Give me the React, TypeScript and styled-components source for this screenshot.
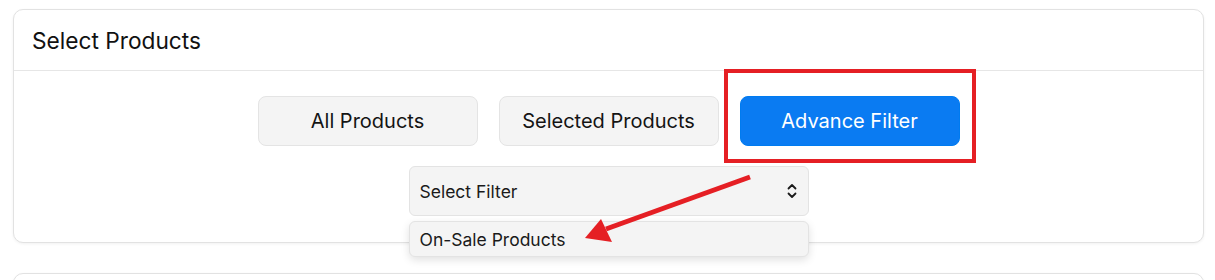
import React from 'react';
import styled, { createGlobalStyle } from 'styled-components';

const GlobalStyle = createGlobalStyle`
  body {
    margin: 0;
    background: #ffffff;
    font-family: Inter, "Noto Sans", sans-serif;
    color: #111111;
  }
`

const Page = styled.div`
  padding: 9px 11px 0 13px;
  display: flex;
  flex-direction: column;
  gap: 30px;
`

const Card = styled.div`
  position: relative;
  background: #ffffff;
  border: 1px solid #e2e2e2;
  border-radius: 10px;
  box-shadow: 0 1px 3px rgba(0, 0, 0, 0.06);
`

const CardHeader = styled.div`
  height: 60px;
  padding: 0 18px;
  display: flex;
  align-items: center;
  border-bottom: 1px solid #e6e6e6;
`

const Title = styled.h3`
  margin: 0;
  font-size: 22.7px;
  font-weight: 400;
  color: #111111;
`

const CardBody = styled.div`
  padding: 25px 0 26px;
  display: flex;
  flex-direction: column;
  align-items: center;
  gap: 20px;
`

const ButtonRow = styled.div`
  display: flex;
  gap: 21px;
`

const ButtonWrap = styled.div`
  position: relative;
`

const Tab = styled.button<{ $active?: boolean }>`
  width: 220px;
  height: 50px;
  border-radius: 8px;
  font-family: Inter, "Noto Sans", sans-serif;
  font-size: 20px;
  cursor: pointer;
  border: 1px solid ${p => (p.$active ? '#007bf0' : '#e4e4e4')};
  background: ${p => (p.$active ? '#0a7bf2' : '#f4f4f4')};
  color: ${p => (p.$active ? '#ffffff' : '#141414')};
`

const Highlight = styled.div`
  position: absolute;
  left: -16px;
  right: -16px;
  top: -27px;
  bottom: -17px;
  border: 4px solid #e51f24;
  pointer-events: none;
`

const SelectWrap = styled.div`
  position: relative;
  width: 400px;
`

const SelectBox = styled.div`
  height: 48px;
  border: 1px solid #e3e3e3;
  border-radius: 6px;
  background: #f4f4f4;
  display: flex;
  align-items: center;
  justify-content: space-between;
  padding: 0 10px;
  font-size: 17.5px;
  color: #1a1a1a;
`

const Menu = styled.div`
  position: absolute;
  top: 55px;
  left: 0;
  right: 0;
  height: 34px;
  border: 1px solid #e3e3e3;
  border-radius: 6px;
  background: #f4f4f4;
  box-shadow: 0 3px 8px rgba(0, 0, 0, 0.12);
  display: flex;
  align-items: center;
  padding: 0 10px;
  font-size: 17.5px;
  color: #1a1a1a;
  z-index: 2;
`

const Arrow = styled.svg`
  position: absolute;
  left: 558px;
  top: 157px;
  z-index: 3;
  overflow: visible;
`

const NextCard = styled(Card)`
  height: 40px;
`

const Chevrons = () => (
  <svg width="12" height="18" viewBox="0 0 12 18" fill="none" stroke="#1a1a1a" strokeWidth="1.8" strokeLinecap="round" strokeLinejoin="round">
    <path d="M2.5 6.5 L6 3 L9.5 6.5" />
    <path d="M2.5 11.5 L6 15 L9.5 11.5" />
  </svg>
)

export default function App() {
  return (
    <>
      <GlobalStyle />
      <Page>
        <Card>
          <CardHeader>
            <Title>Select Products</Title>
          </CardHeader>
          <CardBody>
            <ButtonRow>
              <Tab>All Products</Tab>
              <Tab>Selected Products</Tab>
              <ButtonWrap>
                <Tab $active>Advance Filter</Tab>
                <Highlight />
              </ButtonWrap>
            </ButtonRow>
            <SelectWrap>
              <SelectBox>
                <span>Select Filter</span>
                <Chevrons />
              </SelectBox>
              <Menu>On-Sale Products</Menu>
            </SelectWrap>
          </CardBody>
          <Arrow width="190" height="80" viewBox="0 0 190 80">
            <line x1="178" y1="10" x2="34" y2="62" stroke="#e51f24" strokeWidth="5" strokeLinecap="butt" />
            <polygon points="13,71 29,52 40,75" fill="#e51f24" />
          </Arrow>
        </Card>
        <NextCard />
      </Page>
    </>
  )
}
